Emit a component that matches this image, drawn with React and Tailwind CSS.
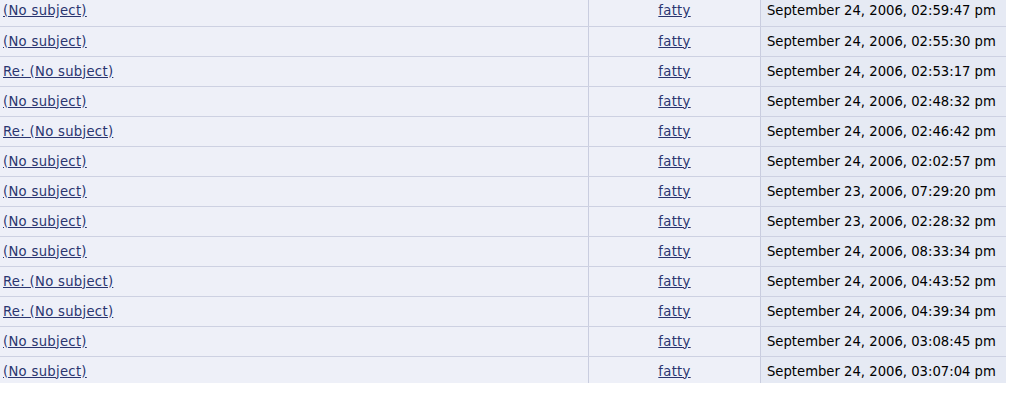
import React from 'react';

const rows = [
  { subject: '(No subject)', date: 'September 24, 2006, 02:59:47 pm' },
  { subject: '(No subject)', date: 'September 24, 2006, 02:55:30 pm' },
  { subject: 'Re: (No subject)', date: 'September 24, 2006, 02:53:17 pm' },
  { subject: '(No subject)', date: 'September 24, 2006, 02:48:32 pm' },
  { subject: 'Re: (No subject)', date: 'September 24, 2006, 02:46:42 pm' },
  { subject: '(No subject)', date: 'September 24, 2006, 02:02:57 pm' },
  { subject: '(No subject)', date: 'September 23, 2006, 07:29:20 pm' },
  { subject: '(No subject)', date: 'September 23, 2006, 02:28:32 pm' },
  { subject: '(No subject)', date: 'September 24, 2006, 08:33:34 pm' },
  { subject: 'Re: (No subject)', date: 'September 24, 2006, 04:43:52 pm' },
  { subject: 'Re: (No subject)', date: 'September 24, 2006, 04:39:34 pm' },
  { subject: '(No subject)', date: 'September 24, 2006, 03:08:45 pm' },
  { subject: '(No subject)', date: 'September 24, 2006, 03:07:04 pm' },
];

const App = () => {
  return (
    <div className="w-[1009px] h-[401px] overflow-hidden bg-white font-['DejaVu_Sans',Verdana,sans-serif] text-[13.2px]">
      <div className="w-[1006px] h-[383px] overflow-hidden">
        <div className="-mt-[4px]">
          {rows.map((r, i) => (
            <div
              key={i}
              className={`flex h-[30px] ${i > 0 ? 'border-t border-[#cdd1e2]' : ''}`}
            >
              <div className="w-[589px] flex items-center pl-[3px] bg-[#eef0f8] border-r border-[#c9cddf]">
                <a href="#" className="text-[#2a3570] underline tracking-[0.3px]">{r.subject}</a>
              </div>
              <div className="w-[172px] flex items-center justify-center bg-[#eef0f8] border-r border-[#c9cddf]">
                <a href="#" className="text-[#2a3570] underline tracking-[0.3px]">fatty</a>
              </div>
              <div className="flex-1 flex items-center pl-[6px] bg-[#e6eaf4] text-black">
                {r.date}
              </div>
            </div>
          ))}
        </div>
      </div>
    </div>
  );
};

export default App;
